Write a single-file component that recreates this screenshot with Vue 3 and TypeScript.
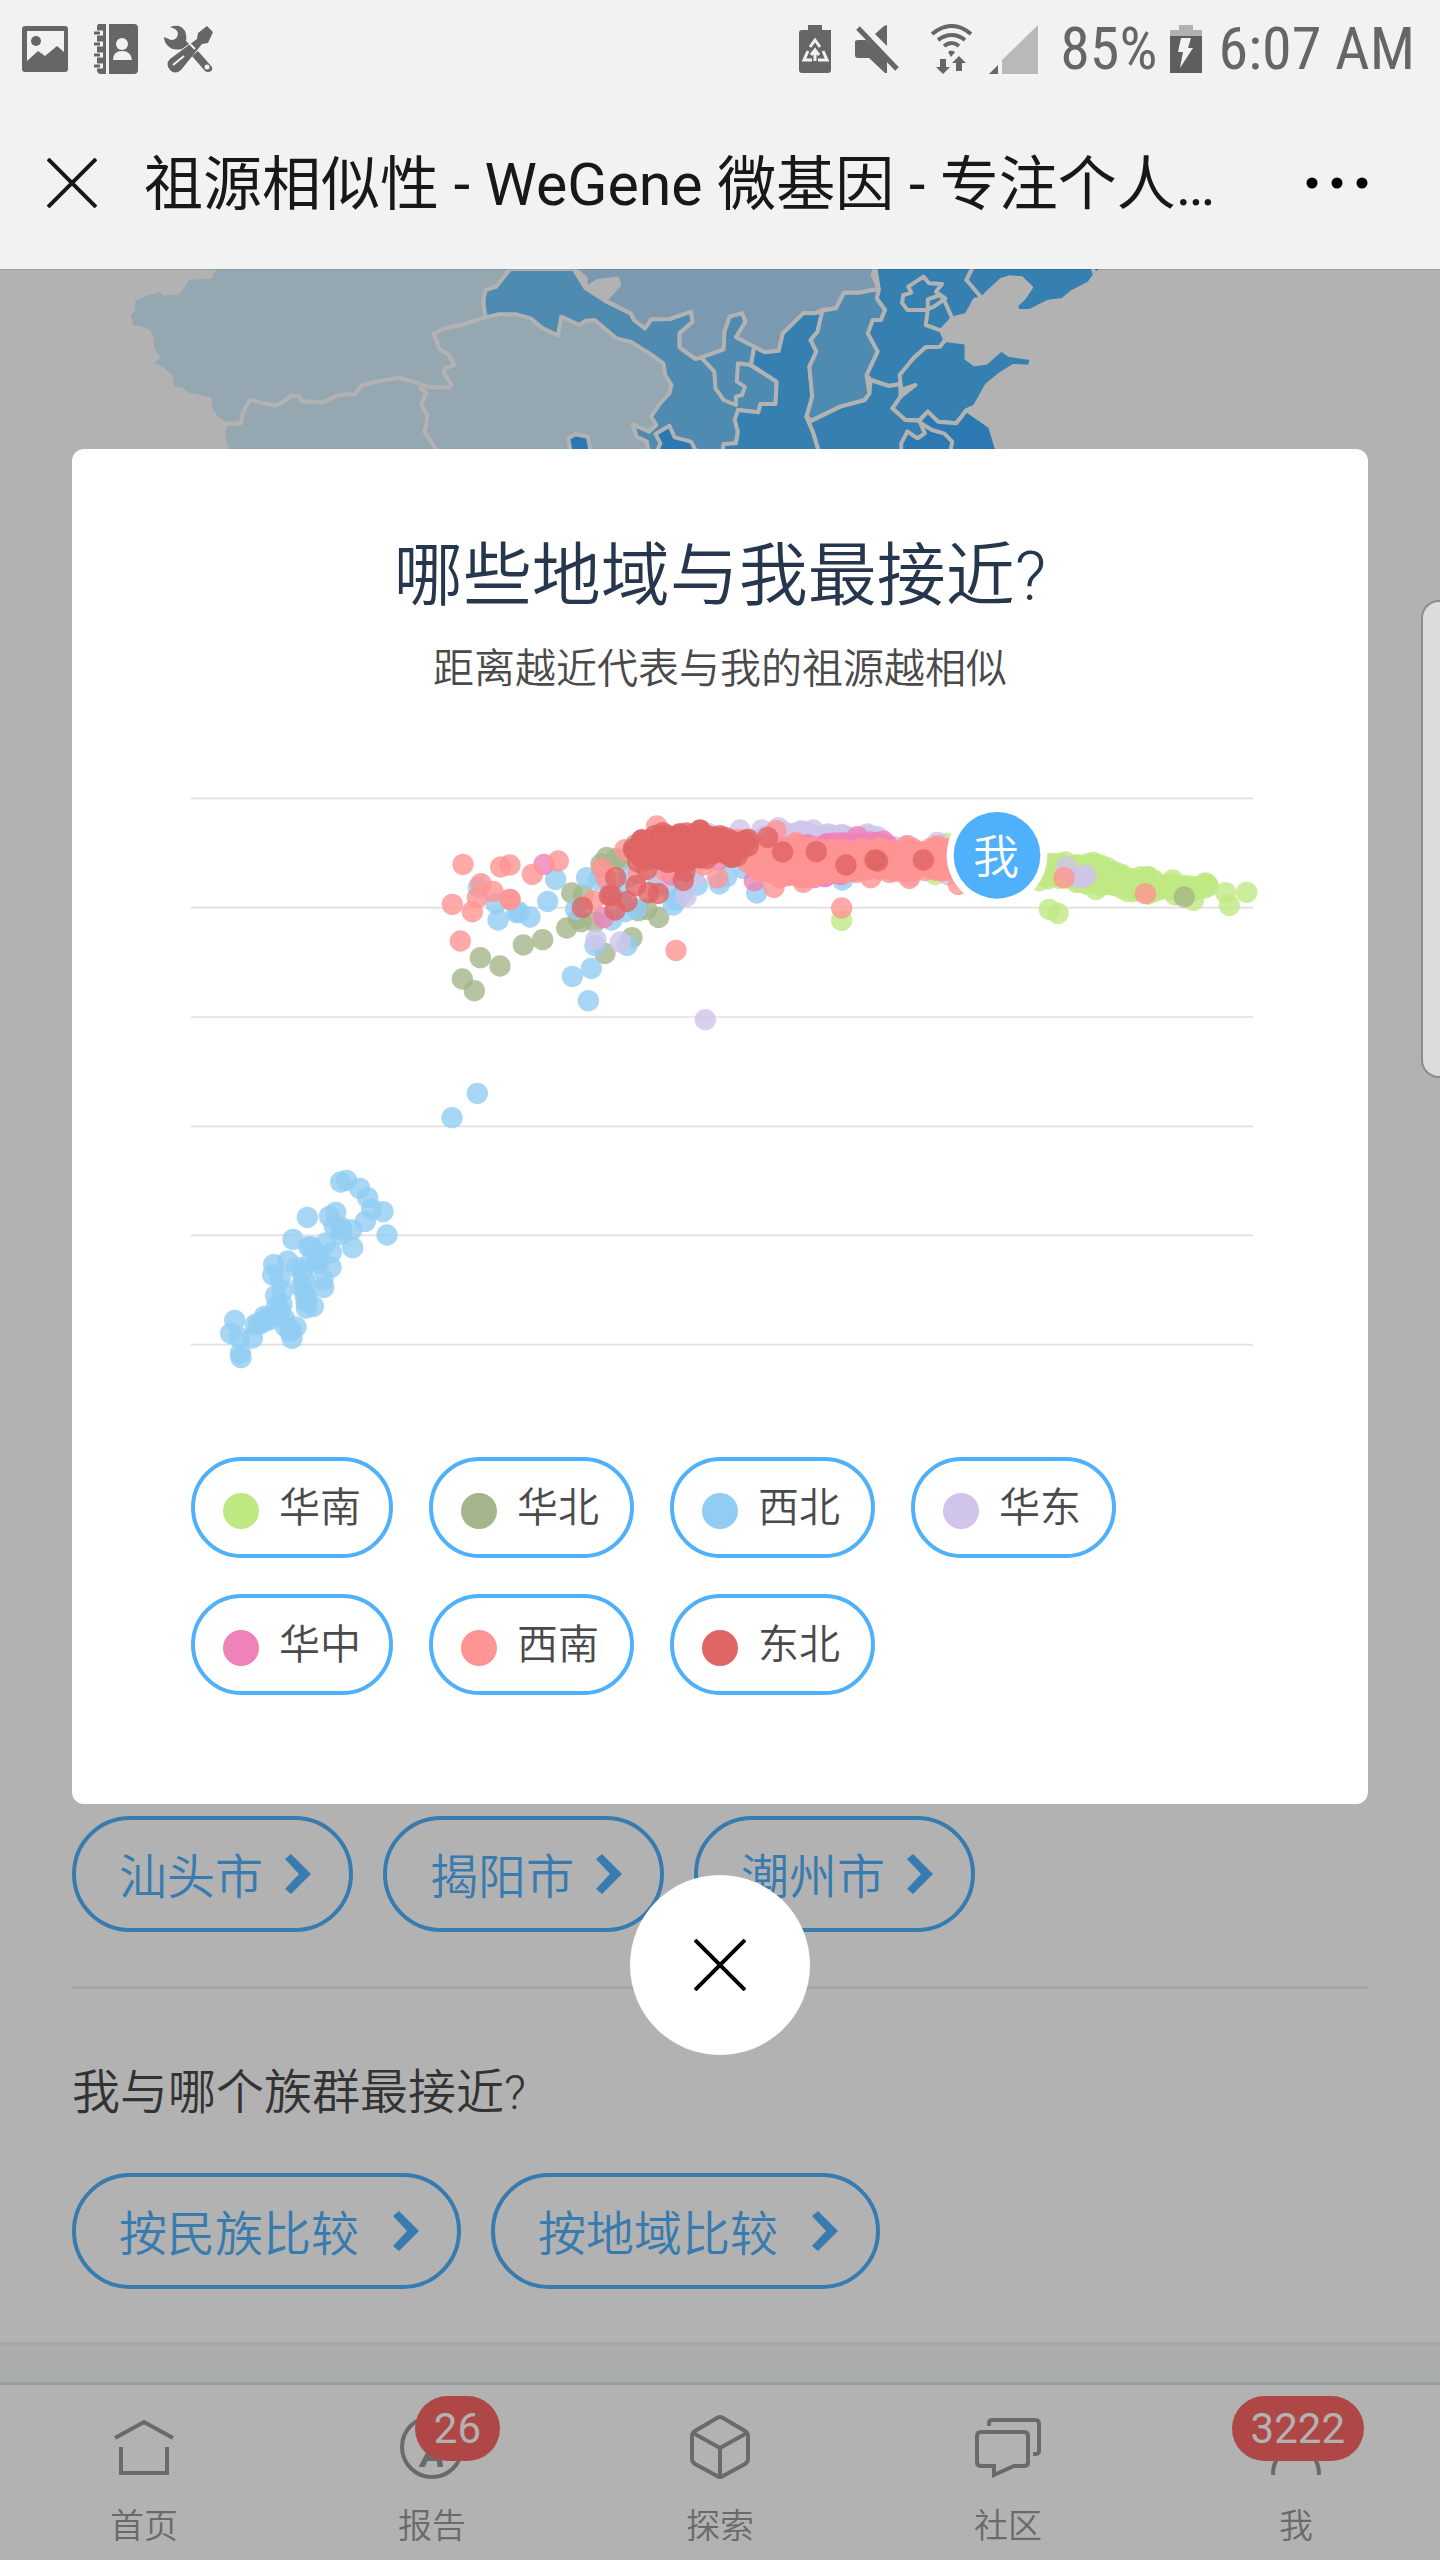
<script setup lang="ts">
interface Series {
  name: string
  color: string
  points: number[][]
}

const DOT = 32

/** Fills a dense cloud: each stop is [x, top centre, bottom centre]. */
function cloud(stops: number[][], step = 20): number[][] {
  const out: number[][] = []
  let seed = 7
  const jitter = () => {
    seed = (seed * 16807) % 2147483647
    return (seed % 13) - 6
  }
  for (let i = 0; i < stops.length - 1; i++) {
    const [x0, t0, b0] = stops[i]
    const [x1, t1, b1] = stops[i + 1]
    const count = Math.max(1, Math.round((x1 - x0) / step))
    for (let k = 0; k <= count; k++) {
      const f = k / count
      const x = x0 + (x1 - x0) * f
      const top = t0 + (t1 - t0) * f
      const bottom = b0 + (b1 - b0) * f
      const rows = Math.max(1, Math.round((bottom - top) / 26))
      for (let r = 0; r <= rows; r++) {
        out.push([Math.round(x), Math.round(top + ((bottom - top) * r) / rows + jitter())])
      }
    }
  }
  return out
}

const series: Series[] = [
  {
    name: '华南',
    color: '#bfe883',
    points: [
      ...cloud([[2537, 255, 292], [2607, 248, 292], [2657, 258, 302], [2707, 250, 310], [2747, 268, 318], [2792, 284, 324], [2827, 296, 332], [2872, 296, 342], [2907, 314, 334]]),
      ...cloud([[2942, 304, 335], [2987, 318, 344], [3042, 314, 322]]),
      [2545, 302], [2575, 388], [2601, 400], [2715, 329], [2707, 247], [2945, 300], [2952, 345], [3007, 361],
      [3047, 311], [3052, 318], [3104, 338], [3115, 376], [3167, 337], [1952, 421], [2267, 190], [2232, 283],
    ],
  },
  {
    name: '华北',
    color: '#a4b58b',
    points: [
      [1247, 232], [1230, 252], [1290, 240], [1332, 195], [1277, 235], [1142, 339], [1177, 345], [1127, 444],
      [1162, 415], [1171, 425], [1212, 425], [1342, 392], [1367, 388], [1403, 412], [1323, 473], [1242, 520],
      [1055, 479], [997, 495], [868, 533], [927, 558], [814, 597], [850, 632], [2980, 351],
    ],
  },
  {
    name: '西北',
    color: '#91cdf2',
    points: [
      [1094, 298], [1070, 364], [862, 322], [915, 370], [921, 420], [977, 398], [984, 396], [1017, 411],
      [1187, 293], [1222, 300], [1154, 388], [1262, 420], [1302, 395], [1337, 386], [1447, 375], [1457, 360],
      [1477, 340], [1519, 315], [1585, 312], [1607, 290], [1657, 265], [1697, 339], [1312, 290], [1260, 330],
      [1290, 350], [1400, 300], [1430, 320],
      [1212, 497], [1308, 496], [1144, 589], [1201, 565], [1192, 662], [1954, 300],
      [859, 940], [783, 1013],
      [449, 1206], [467, 1201], [506, 1225], [530, 1253], [542, 1287], [576, 1295], [523, 1324], [588, 1365],
      [349, 1312], [415, 1309], [434, 1297], [430, 1339], [451, 1342], [452, 1350], [482, 1350], [450, 1364],
      [485, 1403], [306, 1378], [405, 1389], [353, 1400], [361, 1400], [421, 1417], [375, 1420], [385, 1428],
      [378, 1438], [387, 1440], [360, 1445], [379, 1450], [248, 1454], [290, 1443], [318, 1462], [245, 1485],
      [268, 1498], [335, 1472], [337, 1494], [330, 1520], [420, 1462], [396, 1500], [398, 1522], [254, 1546],
      [274, 1533], [340, 1525], [342, 1545], [348, 1555], [345, 1565], [273, 1573], [257, 1577], [367, 1579],
      [346, 1584], [268, 1592], [260, 1600], [280, 1615], [220, 1609], [228, 1615], [235, 1620], [217, 1625],
      [210, 1630], [203, 1632], [193, 1633], [283, 1640], [315, 1641], [131, 1621], [119, 1660], [145, 1673],
      [184, 1674], [300, 1650], [297, 1655], [303, 1675], [148, 1720], [150, 1733],
    ],
  },
  {
    name: '华东',
    color: '#d0c4ea',
    points: [
      ...cloud([[1690, 175, 210], [1760, 160, 210], [1850, 160, 210], [1950, 170, 210], [2060, 175, 215]]),
      [1647, 150], [1712, 150], [1762, 143], [1832, 152], [1867, 150], [1552, 160], [1922, 165], [1957, 165],
      [2029, 162], [2109, 200], [2152, 197], [2239, 187], [2272, 285], [2157, 290], [1215, 479], [1288, 486],
      [1485, 350], [1507, 290], [1407, 310], [1543, 719], [2627, 260], [2654, 290], [2672, 294], [2686, 285],
    ],
  },
  {
    name: '华中',
    color: '#ee82b9',
    points: [
      ...cloud([[1770, 205, 285], [1850, 200, 290], [1950, 194, 280], [2040, 192, 250], [2090, 196, 240]]),
      [1059, 253], [1237, 413], [1690, 302], [1582, 240], [1442, 285], [1902, 290], [1902, 195], [1944, 193],
      [1999, 170], [2077, 183], [1904, 288],
    ],
  },
  {
    name: '西南',
    color: '#ff9494',
    points: [
      ...cloud([[1667, 215, 250], [1707, 205, 274], [1767, 208, 290], [1817, 200, 290], [1887, 212, 284], [1977, 214, 272], [2067, 206, 266], [2147, 210, 270], [2237, 210, 268], [2287, 212, 272]]),
      [2147, 197], [2239, 197], [2039, 293], [2155, 295], [2095, 277], [2302, 313], [1952, 384], [2619, 293],
      [2863, 341], [1397, 138], [1302, 209], [1232, 265], [1245, 295], [1207, 362], [1422, 272], [1537, 255],
      [1580, 293], [1755, 152], [1814, 188], [1749, 322], [1837, 307], [1455, 511], [816, 253], [929, 261],
      [957, 255], [1024, 283], [1102, 243], [870, 311], [906, 334], [859, 353], [844, 395], [784, 373],
      [808, 483], [957, 358], [957, 358], [1342, 280], [1637, 178], [1500, 240], [1620, 230],
    ],
  },
  {
    name: '东北',
    color: '#e06464',
    points: [
      ...cloud([[1330, 205, 215], [1352, 184, 232], [1412, 165, 240], [1467, 165, 242], [1527, 156, 238], [1587, 170, 220], [1622, 186, 236], [1672, 184, 196]]),
      [1327, 205], [1352, 180], [1527, 150], [1587, 167], [1415, 158], [1664, 180], [1477, 301], [1482, 275], [1367, 268], [1340, 245],
      [1430, 243], [1730, 172], [1775, 216], [1876, 215], [1965, 255], [2052, 240], [2060, 243], [2197, 240],
      [1274, 293], [1255, 347], [1261, 347], [1174, 382], [1308, 364], [1272, 390], [1335, 317], [1373, 338], [1402, 340],
    ],
  },
]

const gridLines = [55, 383, 711, 1039, 1366, 1694]

const cities = ['汕头市', '揭阳市', '潮州市']
const compares = ['按民族比较', '按地域比较']
</script>

<template>
  <div class="screen">
    <header>
      <div class="status">
        <div class="status-left">
          <svg width="46" height="46" viewBox="0 0 46 46" fill="#666">
            <path fill-rule="evenodd" d="M3 0h40q3 0 3 3v40q0 3-3 3H3q-3 0-3-3V3q0-3 3-3zM5 5v30l11-10 7 5 12-10 7 6V5z" />
            <circle cx="14" cy="15" r="5" />
          </svg>
          <svg width="46" height="50" viewBox="0 0 46 50" fill="#666">
            <path d="M5 0h8v50H7q-3-1-3-4V4q0-3 1-4zM16 0h25q4 0 4 4v42q0 4-4 4H16z" />
            <g fill="none" stroke="#f2f2f2" stroke-width="5">
              <path d="M2 9h8M2 20h8M2 31h8M2 42h8" />
            </g>
            <g stroke="#666" stroke-width="3"><path d="M1 9h6M1 20h6M1 31h6M1 42h6" /></g>
            <g fill="#f2f2f2"><circle cx="29" cy="20" r="6" /><path d="M20 36q0-9 9-9t10 9z" /></g>
          </svg>
          <svg width="50" height="48" viewBox="0 0 50 48" fill="#666">
            <path d="M6 2q10-4 15 4 2 5 1 10l3 3-7 5q-9 2-14-3-4-4-4-9l7 3q6 0 7-6 0-5-8-7zM28 31l6-5 14 16q1 5-4 5-2 0-3-1z" />
            <path d="M43 1l6 6-5 11-6 1L17 45q-6 5-11 0-5-6 0-11L33 14l1-6z" />
            <path d="M20 31L9 40M26 19l5 5" stroke="#f2f2f2" stroke-width="2" />
            <ellipse cx="43" cy="42" rx="2.500" ry="2.500" fill="#f2f2f2" />
          </svg>
        </div>
        <div class="status-right">
          <svg width="32" height="48" viewBox="0 0 32 48" fill="#666">
            <path d="M9 0h14v5h9v40q0 3-3 3H3q-3 0-3-3V8q0-3 3-3h6z" />
            <path d="M11 22l5-7 5 7M24 26l4 9h-9M13 35H5l4-9M16 36v-9m-4 3l4-5 4 5" fill="none" stroke="#f2f2f2" stroke-width="3" />
          </svg>
          <svg class="mute" width="45" height="48" viewBox="0 0 45 48" fill="#666">
            <path d="M32 0v21L20 9l9-8zM0 17q0-2 3-2h8l21 21v12h-2L14 33H3q-3 0-3-3z" />
            <path d="M3 3l39 41" stroke="#666" stroke-width="5" />
          </svg>
          <svg class="wifi" width="43" height="50" viewBox="0 0 43 50">
            <g fill="none" stroke="#666" stroke-width="4">
              <path d="M2 10q20-16 39 0M8 16q14-10 27 0M14 22q8-6 15 0" />
            </g>
            <path d="M18 28q3-3 7 0l-4 5zM10 35h6v8h4l-7 7-7-7h4zM26 47h6v-8h4l-7-7-7 7h4z" fill="#666" />
          </svg>
          <svg width="50" height="49" viewBox="0 0 50 49">
            <path d="M49 0v49H13V35z" fill="#b9b9b9" /><path d="M9 40v9H0z" fill="#666" />
          </svg>
          <span class="pct">85%</span>
          <svg width="32" height="48" viewBox="0 0 32 48">
            <path d="M9 0h14v5h9v6H0V5h9z" fill="#b2b2b2" /><path d="M0 11h32v37H0z" fill="#5e5e5e" />
            <path d="M11 13h10l-3 10h5L10 43l3-16H8z" fill="#f2f2f2" />
          </svg>
          <span class="clock">6:07 AM</span>
        </div>
      </div>
      <div class="nav">
        <button class="plain" aria-label="关闭页面">
          <svg width="50" height="50" viewBox="0 0 50 50"><path d="M1 1l48 48M49 1L1 49" stroke="#181818" stroke-width="4" /></svg>
        </button>
        <h1>祖源相似性 - WeGene 微基因 - 专注个人…</h1>
        <button class="plain more" aria-label="更多">
          <svg width="62" height="12" viewBox="0 0 62 12"><circle cx="6" cy="6" r="5.500" /><circle cx="31" cy="6" r="5.500" /><circle cx="56" cy="6" r="5.500" /></svg>
        </button>
      </div>
    </header>

    <div class="body">
      <main>
        <section class="map">
          <svg viewBox="-245 27 3528 540" preserveAspectRatio="none" aria-label="中国地图">
            <g fill="#71c7fe">
              <path d="M1005 27H1160L1190 85 1237 122 1300 160 1335 205 1350 178 1395 177 1448 155 1452 185 1420 220 1420 262 1458 296 1478 292 1603 260 1593 315 1658 365 1655 432 1618 432 1613 457 1563 450 1558 480 1563 515 1558 550 1528 555 1523 590H1300L940 172V90L970 80z" />
            </g>
            <g fill="#d6f0fd">
              <path d="M285 10L270 50 240 52 215 54 205 75 190 98 155 100 150 85 135 95 110 103 82 118 80 150 70 165 78 205 95 203 120 215 127 240 128 265 142 293 120 308 150 325 172 348 178 385 200 388 215 403 268 417 270 445 285 475 308 492 345 490 350 458 368 420 400 430 430 437 450 425 468 407 487 408 495 424 545 428 585 405 625 403 640 377 690 362 730 354 770 366 800 380 855 383 862 375 843 340 845 325 868 315 855 285 830 265 825 240 817 222 840 207 885 195 945 172 938 125 945 90 970 80 1015 10z" />
              <path d="M308 492L345 490 350 458 368 420 400 430 430 437 450 425 468 407 487 408 495 424 545 428 585 405 625 403 640 377 690 362 730 354 770 366 800 380 785 385 800 398 787 435 802 465 800 490 795 515 825 570V590H318L305 545 302 515z" />
              <path d="M817 222L840 207 885 195 945 172 975 163 1020 163 1055 175 1085 205 1122 227 1130 170 1175 195 1190 182 1212 180 1265 235 1300 245 1350 283 1380 310 1385 345 1400 375 1395 400 1372 430 1350 470 1363 495 1345 515 1305 493 1315 530 1340 545 1345 590H825V570L795 515 800 490 802 465 787 435 800 398 785 385 800 380 855 383 862 375 843 340 845 325 868 315 855 285 830 265 825 240z" />
            </g>
            <path d="M1155 590L1147 535 1165 523 1195 530 1205 590z" fill="#3fadff" />
            <g transform="translate(1323 0)">
              <path d="M-175 10L-133 55-133 85-103 62-55 56-51 75-86 122-55 140-23 160-15 180 12 205 27 178 72 177 125 155 129 185 97 220 97 262 135 296 155 292 205 268 207 215 220 170 250 160 258 185 235 232 280 260 305 277 340 272 350 220 400 160 430 160 445 150 480 145 500 98 535 98 585 87 570 45 580 10z" fill="#b1dcfc" />
              <path d="M150 292L205 268 207 215 220 170 250 160 258 185 235 232 280 260 272 315 240 310 237 365 257 380 250 405 235 410 235 435 205 420 185 385 182 335z" fill="#71c7fe" />
              <g fill="#4db7fe">
                <path d="M280 260L305 277 340 272 350 220 400 160 430 160 447 152 435 215 418 240 432 275 415 320 422 410 408 470 425 520 442 590H200L205 552 235 550 240 515 232 480 240 450 290 457 295 432 332 432 335 365 272 315z" />
                <path d="M575 10L585 87 580 115 600 150 590 180 570 180 558 220 582 275 555 345 565 360 610 378 638 372 640 345 670 295 700 262 735 260 748 240 738 212 765 175 800 165 820 120 838 115 830 85 800 60 820 10z" />
                <path d="M645 105L665 98 657 80 695 50 708 70 740 72 725 95 748 115 720 140 700 150 655 150 642 128zM705 150L700 195 738 212 765 175 745 120 735 105 705 118z" />
                <path d="M820 10L800 60 838 115 850 100 885 60 905 52 935 55 958 82 940 115 922 135 925 153 955 153 1000 125 1035 120 1060 95 1100 70 1115 45 1110 27 1115 45 1145 10z" />
                <path d="M748 240L800 248 800 295 820 313 848 308 885 268 905 285 960 295 955 320 915 318 880 345 850 375 820 440 800 450 775 490 730 485 705 455 685 480 650 480 618 445 638 410 675 375 640 390 636 345 670 295 700 262 735 260z" />
                <path d="M408 470L420 482 490 440 550 420 562 400 565 360 610 378 638 372 638 410 618 445 650 480 685 482 698 520 680 535 655 515 640 590H442L425 520z" />
              </g>
              <path d="M447 152L480 145 500 98 535 98 585 87 580 115 600 150 590 180 570 180 558 220 582 275 555 345 562 400 550 420 490 440 420 482 408 470 422 410 415 320 432 275 418 240 435 215z" fill="#71c7fe" />
              <g fill="#3fadff">
                <path d="M685 482L705 455 730 485 775 490 800 450 858 500 880 590H640L640 550 655 515 680 535 698 520z" />
                <path d="M690 490L715 510 745 520 765 545 758 590" fill="none" />
                <path d="M35 590L50 550 38 522 72 497 85 532 125 545 145 590z" />
              </g>
            </g>
          </svg>
        </section>

        <nav class="chips">
          <a v-for="c in cities" :key="c" href="#" class="chip">
            {{ c }}
            <svg width="26" height="40" viewBox="0 0 26 40"><path d="M0 5L6 0 26 20 6 40 0 35 14 20z" fill="#4fb0fb" /></svg>
          </a>
        </nav>
        <hr />
        <h2>我与哪个族群最接近?</h2>
        <nav class="chips">
          <a v-for="c in compares" :key="c" href="#" class="chip wide">
            {{ c }}
            <svg width="26" height="40" viewBox="0 0 26 40"><path d="M0 5L6 0 26 20 6 40 0 35 14 20z" fill="#4fb0fb" /></svg>
          </a>
        </nav>
      </main>
      <div class="band"></div>
      <nav class="tabs">
        <a href="#" class="tab">
          <svg width="64" height="64" viewBox="0 0 64 64"><path d="M3 23L32 7l29 16M9 32v26h46V32" /></svg>
          首页
        </a>
        <a href="#" class="tab">
          <svg width="64" height="64" viewBox="0 0 64 64">
            <circle cx="32" cy="32" r="30" />
            <text x="33" y="52" text-anchor="middle">A</text>
          </svg>
          报告
          <span class="badge">26</span>
        </a>
        <a href="#" class="tab">
          <svg width="64" height="64" viewBox="0 0 64 64"><path d="M29 3q3-2 6 0l22 13q3 2 3 5v23q0 3-3 5L35 61q-3 2-6 0L7 49q-3-2-3-5V21q0-3 3-5zM5 18l27 15 27-15M32 33v29" /></svg>
          探索
        </a>
        <a href="#" class="tab">
          <svg width="66" height="64" viewBox="0 0 66 64"><path d="M14 11V8q0-3 3-3h43q4 0 4 4v27q0 3-4 3h-2M6 17h43q4 0 4 4v26q0 4-4 4H39L19 60v-9H6q-4 0-4-4V21q0-4 4-4z" /></svg>
          社区
        </a>
        <a href="#" class="tab">
          <svg width="64" height="64" viewBox="0 0 64 64"><circle cx="32" cy="18" r="13" /><path d="M9 60q0-24 23-25 23 1 23 25" /></svg>
          我
          <span class="badge">3222</span>
        </a>
      </nav>

      <div class="overlay">
        <div class="dialog" role="dialog" aria-labelledby="dialog-title">
          <h2 id="dialog-title" class="title">哪些地域与我最接近?</h2>
          <p class="subtitle">距离越近代表与我的祖源越相似</p>
          <div class="plot">
            <svg class="chart" viewBox="0 0 3186 1740">
              <path v-for="y in gridLines" :key="y" :d="`M0 ${y}H3186`" stroke="#e0e0e0" stroke-width="5" />
              <g v-for="s in series" :key="s.name" :fill="s.color" fill-opacity="0.8">
                <circle v-for="(p, i) in s.points" :key="i" :cx="p[0]" :cy="p[1]" :r="DOT" />
              </g>
              <circle cx="2418" cy="226" r="151" fill="#fff" />
              <circle cx="2418" cy="226" r="130" fill="#4fb0fb" />
              <text x="2415" y="278" text-anchor="middle" fill="#fff" font-size="138">我</text>
            </svg>
            <div class="legend">
              <button v-for="s in series" :key="s.name" class="key">
                <i :style="{ background: s.color }"></i>{{ s.name }}
              </button>
            </div>
          </div>
        </div>
        <button class="close" aria-label="关闭">
          <svg width="52" height="52" viewBox="0 0 52 52"><path d="M1 1l50 50M51 1L1 51" stroke="#000" stroke-width="4" /></svg>
        </button>
      </div>
      <div class="edge"></div>
    </div>
  </div>
</template>

<style>
body {
  background: #fff;
}
</style>

<style scoped>
.screen {
  min-height: 100vh;
  display: flex;
  flex-direction: column;
  font-family: Roboto, "Noto Sans CJK SC", sans-serif;
  font-weight: 350;
  color: #4a4a4a;
}
* {
  box-sizing: border-box;
}
h1, h2, p {
  margin: 0;
  font-weight: inherit;
}
svg {
  display: block;
  flex: none;
}
button {
  font: inherit;
  color: inherit;
  background: none;
  border: 0;
  padding: 0;
}
a {
  color: inherit;
  text-decoration: none;
}
header {
  background: #f2f2f2;
}
.status {
  height: 96px;
  padding: 2px 25px 0 22px;
  display: flex;
  justify-content: space-between;
  align-items: center;
  font-family: "Roboto Condensed", Roboto, sans-serif;
  font-weight: 400;
  font-size: 60px;
  line-height: 72px;
  color: #666;
}
.status-left {
  display: flex;
  align-items: center;
  gap: 25px;
}
.status-right {
  display: flex;
  align-items: center;
  gap: 16px;
}
.mute {
  margin-left: 8px;
}
.wifi {
  margin-left: 14px;
}
.pct {
  margin-left: 5px;
  margin-right: -3px;
}
.nav {
  height: 173px;
  display: flex;
  align-items: center;
  padding: 0 72px 0 47px;
}
.nav h1 {
  flex: 1;
  margin-left: 47px;
  padding-top: 4px;
  font-size: 59px;
  line-height: 80px;
  font-weight: 400;
  color: #181818;
  white-space: nowrap;
}
.body {
  position: relative;
  flex: 1;
  display: flex;
  flex-direction: column;
}
main {
  flex: 1;
  padding: 0 72px 53px;
}
.map {
  margin: 0 -72px;
  min-height: 1547px;
}
.map svg {
  width: 100%;
  height: 180px;
}
.map path {
  stroke: #fff;
  stroke-width: 4px;
  stroke-linejoin: round;
  vector-effect: non-scaling-stroke;
}
.chips {
  display: flex;
  gap: 30px;
}
.chip {
  height: 116px;
  padding: 0 38px 0 43px;
  border: 4px solid #4fb0fb;
  border-radius: 58px;
  display: flex;
  align-items: center;
  gap: 22px;
  color: #4fb0fb;
  font-size: 48px;
  line-height: 72px;
  padding-top: 8px;
}
.chip svg {
  margin-bottom: 8px;
}
.chip.wide {
  gap: 34px;
}
hr {
  margin: 54px 0 68px;
  border: 0;
  height: 3px;
  background: #ededed;
}
main h2 {
  font-size: 48px;
  line-height: 72px;
  margin-bottom: 44px;
}
.band {
  height: 40px;
  background: #f5f7fa;
  border-top: 3px solid #ebeef0;
}
.tabs {
  height: 178px;
  border-top: 3px solid #dce2e2;
  display: flex;
}
.tab {
  position: relative;
  flex: 1;
  padding-top: 30px;
  display: flex;
  flex-direction: column;
  align-items: center;
  gap: 27px;
  font-size: 34px;
  line-height: 40px;
  color: #999;
}
.tab svg {
  fill: none;
  stroke: #999;
  stroke-width: 4px;
}
.tab text {
  font: italic 700 38px Roboto, sans-serif;
  fill: #999;
  stroke: none;
}
.badge {
  position: absolute;
  top: 11px;
  right: calc(50% - 68px);
  padding: 0 19px;
  border-radius: 33px;
  background: #fb6666;
  color: #fff;
  font-size: 42px;
  line-height: 65px;
  font-weight: 400;
}
.overlay {
  position: absolute;
  inset: 0;
  padding: 179px 72px 0;
  background: rgba(0, 0, 0, 0.3);
  border-top: 1px solid rgba(0, 0, 0, 0.1);
  display: flex;
  flex-direction: column;
  align-items: center;
}
.dialog {
  width: 100%;
  padding: 80px 115px 109px;
  border-radius: 12px;
  background: #fff;
}
.title {
  text-align: center;
  font-size: 69px;
  line-height: 96px;
  color: #26374d;
}
.subtitle {
  text-align: center;
  font-size: 41px;
  line-height: 60px;
  margin: 14px 0 81px;
}
.plot {
  padding-left: 4px;
}
.chart {
  width: 100%;
  overflow: visible;
}
.legend {
  display: grid;
  grid-template-columns: 202px repeat(3, 205px);
  gap: 36px;
  margin-top: 97px;
}
.key {
  height: 101px;
  padding: 0 0 0 28px;
  border: 4px solid #4fb0fb;
  border-radius: 51px;
  display: flex;
  align-items: center;
  gap: 20px;
  font-size: 41px;
  line-height: 60px;
}
.key i {
  width: 36px;
  height: 36px;
  margin-top: 6px;
  border-radius: 50%;
}
.close {
  width: 180px;
  height: 180px;
  margin-top: 71px;
  border-radius: 50%;
  background: #fff;
  display: flex;
  align-items: center;
  justify-content: center;
}
.edge {
  position: absolute;
  top: 331px;
  right: 0;
  width: 19px;
  height: 478px;
  background: #dcdcdc;
  border: 2px solid #8c8c8c;
  border-right: 0;
  border-radius: 18px 0 0 18px;
}
</style>
